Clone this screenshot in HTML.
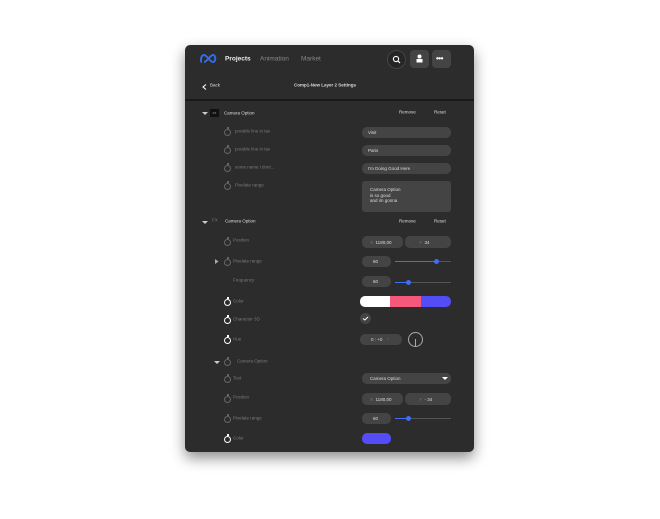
<!DOCTYPE html><html><head><style>
*{margin:0;padding:0;box-sizing:border-box}
body{width:660px;height:519px;background:#fff;position:relative;overflow:hidden;font-family:"Liberation Sans",sans-serif}
#p{position:absolute;left:185px;top:45px;width:289px;height:407px;background:#2c2c2c;border-radius:5px;box-shadow:0 6px 14px rgba(0,0,0,.45)}
.a{position:absolute;white-space:nowrap}
.t{font-size:4.5px;color:#7a7a7a;transform:translateY(-50%)}
.w{color:#ddd}
.in{position:absolute;background:#444;border-radius:5px;font-size:4.5px;color:#ddd;display:flex;align-items:center;padding-left:8px}
.sw{position:absolute;width:7px;height:7px;border:1px solid #666;border-radius:50%}
.sw:before{content:"";position:absolute;left:1.5px;top:-3px;width:2px;height:1.5px;background:#666}
.sw.b{border-color:#fff;border-width:1.3px}.sw.b:before{background:#fff}
.tri{position:absolute;width:0;height:0;border-left:3px solid transparent;border-right:3px solid transparent;border-top:3.5px solid #ccc}
.sl{position:absolute;height:1px;background:#555}
.kn{position:absolute;width:5px;height:5px;border-radius:50%;background:#3d6ef5}
</style></head><body>
<div id="p"></div>
<svg class="a" style="left:200px;top:53px" width="17" height="11" viewBox="0 0 17 11"><path d="M2 9C0 9 1 2 4 2C7 2 10 9 13 9C16 9 16 2 13 2C10 2 7 9 4 9" fill="none" stroke="#2f6cf0" stroke-width="2"/></svg>
<div class="a t w" style="left:225px;top:59px;font-size:6.5px;font-weight:bold;color:#eee">Projects</div>
<div class="a t" style="left:260px;top:59px;font-size:6.5px;color:#888">Animation</div>
<div class="a t" style="left:301px;top:59px;font-size:6.5px;color:#888">Market</div>
<div class="a" style="left:387px;top:50px;width:19px;height:19px;border-radius:50%;border:1px solid #444;background:#262626"></div>
<svg class="a" style="left:392px;top:55px" width="9" height="9"><circle cx="4" cy="4" r="2.6" fill="none" stroke="#fff" stroke-width="1.1"/><path d="M6 6L8 8" stroke="#fff" stroke-width="1.2"/></svg>
<div class="a" style="left:410px;top:50px;width:19px;height:18px;border-radius:4px;background:#444"></div>
<svg class="a" style="left:415px;top:54px" width="9" height="9"><circle cx="4.5" cy="2.5" r="2" fill="#fff"/><rect x="1.5" y="5" width="6" height="3.5" fill="#fff"/></svg>
<div class="a" style="left:432px;top:50px;width:19px;height:18px;border-radius:4px;background:#444"></div>
<div class="a w" style="left:436px;top:54px;font-size:8px;font-weight:bold;letter-spacing:-0.5px;color:#fff">•••</div>
<svg class="a" style="left:202px;top:84px" width="5" height="6"><path d="M4 0.5L1 3L4 5.5" fill="none" stroke="#fff" stroke-width="1.1"/></svg>
<div class="a t w" style="left:210px;top:85px;font-size:4.5px">Back</div>
<div class="a t w" style="left:294px;top:85px;font-size:4.5px;font-weight:bold">Comp1-New Layer 2 Settings</div>
<div class="a" style="left:185px;top:99px;width:289px;height:1.5px;background:#1a1a1a"></div>
<!-- sec1 -->
<div class="tri" style="left:202px;top:112px"></div>
<div class="a" style="left:210px;top:109px;width:9px;height:8px;background:#111;color:#aaa;font-size:3px;text-align:center;line-height:8px">FX</div>
<div class="a t w" style="left:224px;top:113px">Camera Option</div>
<div class="a t w" style="left:399px;top:112px">Remove</div>
<div class="a t w" style="left:434px;top:112px">Reset</div>
<div class="sw" style="left:224px;top:129px"></div><div class="a t" style="left:235px;top:131px">porable line in tax</div>
<div class="sw" style="left:224px;top:147px"></div><div class="a t" style="left:235px;top:149px">porable line in tax</div>
<div class="sw" style="left:224px;top:165px"></div><div class="a t" style="left:235px;top:167px">some name i dont...</div>
<div class="sw" style="left:224px;top:183px"></div><div class="a t" style="left:235px;top:185px">Pixelate range</div>
<div class="in" style="left:362px;top:127px;width:89px;height:11px;padding-left:6px">Visit</div>
<div class="in" style="left:362px;top:145px;width:89px;height:11px;padding-left:6px">Paris</div>
<div class="in" style="left:362px;top:163px;width:89px;height:11px;padding-left:6px">I'm Doing Good Here</div>
<div class="in" style="left:362px;top:181px;width:89px;height:31px;align-items:flex-start;padding:6px 0 0 8px;line-height:5.5px;border-radius:3px">Camera Option<br>is so good<br>and im gonna</div>
<!-- sec2 -->
<div class="tri" style="left:202px;top:221px"></div>
<div class="a t" style="left:212px;top:220px;font-size:4.5px">FX</div>
<div class="a t w" style="left:225px;top:221px">Camera Option</div>
<div class="a t w" style="left:399px;top:221px">Remove</div>
<div class="a t w" style="left:434px;top:221px">Reset</div>
<div class="sw" style="left:224px;top:239px"></div><div class="a t" style="left:233px;top:240px">Position</div>
<div class="in" style="left:362px;top:236px;width:41px;height:12px"><span style="color:#777">X</span>&nbsp;&nbsp;1180,00</div>
<div class="in" style="left:405px;top:236px;width:46px;height:12px;padding-left:14px"><span style="color:#777">Y</span>&nbsp;&nbsp;34</div>
<svg class="a" style="left:215px;top:259px" width="4" height="5"><path d="M0 0L3.5 2.5L0 5Z" fill="#aaa"/></svg>
<div class="sw" style="left:224px;top:259px"></div><div class="a t" style="left:233px;top:261px">Pixelate range</div>
<div class="in" style="left:362px;top:256px;width:29px;height:11px;padding-left:11px">60</div>
<div class="sl" style="left:395px;top:261px;width:56px"></div><div class="sl" style="left:395px;top:261px;width:42px;background:#3d6ef5;height:1px"></div>
<div class="kn" style="left:434px;top:259px"></div>
<div class="a t" style="left:233px;top:280px">Frequency</div>
<div class="in" style="left:362px;top:276px;width:29px;height:11px;padding-left:11px">60</div>
<div class="sl" style="left:395px;top:282px;width:56px"></div><div class="sl" style="left:395px;top:282px;width:13px;background:#3d6ef5"></div>
<div class="kn" style="left:406px;top:280px"></div>
<div class="sw b" style="left:224px;top:299px"></div><div class="a t" style="left:233px;top:301px">Color</div>
<div class="a" style="left:360px;top:296px;width:91px;height:11px;border-radius:5px;overflow:hidden;display:flex"><div style="flex:30;background:#fff"></div><div style="flex:31;background:#f5587a"></div><div style="flex:30;background:#544df5"></div></div>
<div class="sw b" style="left:224px;top:317px"></div><div class="a t" style="left:233px;top:319px">Character 3D</div>
<div class="a" style="left:360px;top:313px;width:11px;height:11px;border-radius:50%;background:#444"></div>
<svg class="a" style="left:362px;top:316px" width="7" height="5"><path d="M1 2.5L2.8 4L6 1" fill="none" stroke="#fff" stroke-width="1"/></svg>
<div class="sw b" style="left:224px;top:337px"></div><div class="a t" style="left:233px;top:339px">Hue</div>
<div class="in" style="left:360px;top:334px;width:42px;height:11px;padding-left:11px">0 : +0 <span style="color:#888;margin-left:5px;font-size:4px">°</span></div>
<div class="a" style="left:408px;top:332px;width:15px;height:15px;border-radius:50%;border:1px solid #aaa"></div>
<div class="a" style="left:415px;top:339px;width:1px;height:7px;background:#aaa"></div>
<!-- sub -->
<div class="tri" style="left:214px;top:361px"></div>
<div class="sw" style="left:224px;top:359px"></div><div class="a t" style="left:237px;top:361px">Camera Option</div>
<div class="sw" style="left:224px;top:376px"></div><div class="a t" style="left:233px;top:378px">Text</div>
<div class="in" style="left:362px;top:373px;width:89px;height:11px">Camera Option</div>
<div class="tri" style="left:442px;top:377px;border-top-color:#fff"></div>
<div class="sw" style="left:224px;top:396px"></div><div class="a t" style="left:233px;top:397px">Position</div>
<div class="in" style="left:362px;top:393px;width:41px;height:12px"><span style="color:#777">X</span>&nbsp;&nbsp;1180,00</div>
<div class="in" style="left:405px;top:393px;width:46px;height:12px;padding-left:14px"><span style="color:#777">Y</span>&nbsp;&nbsp;- 34</div>
<div class="sw" style="left:224px;top:416px"></div><div class="a t" style="left:233px;top:418px">Pixelate range</div>
<div class="in" style="left:362px;top:413px;width:29px;height:11px;padding-left:11px">60</div>
<div class="sl" style="left:395px;top:418px;width:56px"></div><div class="sl" style="left:395px;top:418px;width:13px;background:#3d6ef5"></div>
<div class="kn" style="left:406px;top:416px"></div>
<div class="sw b" style="left:224px;top:436px"></div><div class="a t" style="left:233px;top:438px">Color</div>
<div class="a" style="left:362px;top:433px;width:29px;height:11px;border-radius:5px;background:#544df5"></div>
</body></html>
